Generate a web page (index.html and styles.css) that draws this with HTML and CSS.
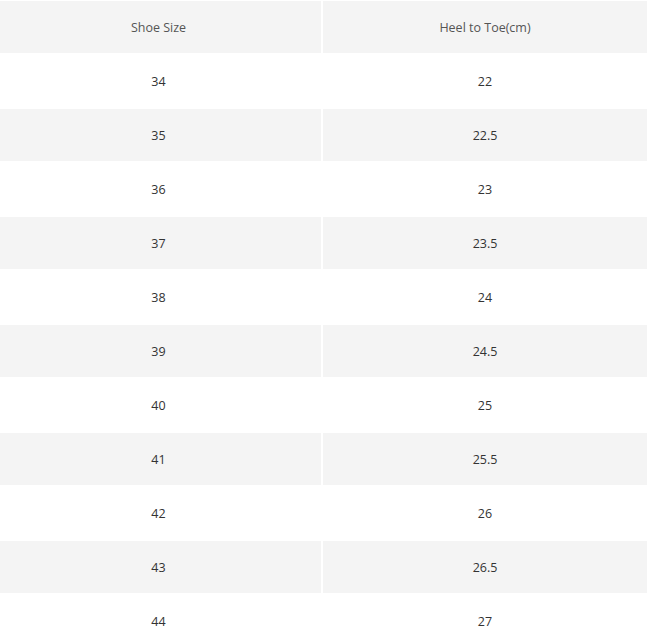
FILE: index.html
```html
<!DOCTYPE html>
<html>
<head>
<meta charset="utf-8">
<link rel="stylesheet" href="styles.css">
</head>
<body>
<table class="size-table">
  <colgroup><col class="col-a"><col class="col-b"></colgroup>
  <tr class="shade"><td class="head">Shoe Size</td><td class="head">Heel to Toe(cm)</td></tr>
  <tr><td>34</td><td>22</td></tr>
  <tr class="shade"><td>35</td><td>22.5</td></tr>
  <tr><td>36</td><td>23</td></tr>
  <tr class="shade"><td>37</td><td>23.5</td></tr>
  <tr><td>38</td><td>24</td></tr>
  <tr class="shade"><td>39</td><td>24.5</td></tr>
  <tr><td>40</td><td>25</td></tr>
  <tr class="shade"><td>41</td><td>25.5</td></tr>
  <tr><td>42</td><td>26</td></tr>
  <tr class="shade"><td>43</td><td>26.5</td></tr>
  <tr><td>44</td><td>27</td></tr>
</table>
</body>
</html>
```
FILE: styles.css
```css
html, body {
  margin: 0;
  padding: 0;
  background: #ffffff;
}
body {
  font-family: "Open Sans", "Noto Sans", sans-serif;
  font-size: 12.5px;
  color: #333333;
  overflow: hidden;
}
.size-table {
  border-collapse: separate;
  border-spacing: 2px;
  margin: -1px 0 0 -2px;
  table-layout: fixed;
  width: 651px;
}
.col-a { width: 321px; }
.col-b { width: 324px; }
.size-table td {
  height: 50px;
  padding: 2px 0 0 0;
  text-align: center;
  vertical-align: middle;
  line-height: 16px;
}
.size-table td:first-child {
  padding-right: 4px;
}
.size-table tr.shade td {
  background: #f4f4f4;
}
.size-table td.head {
  color: #555555;
}
```
